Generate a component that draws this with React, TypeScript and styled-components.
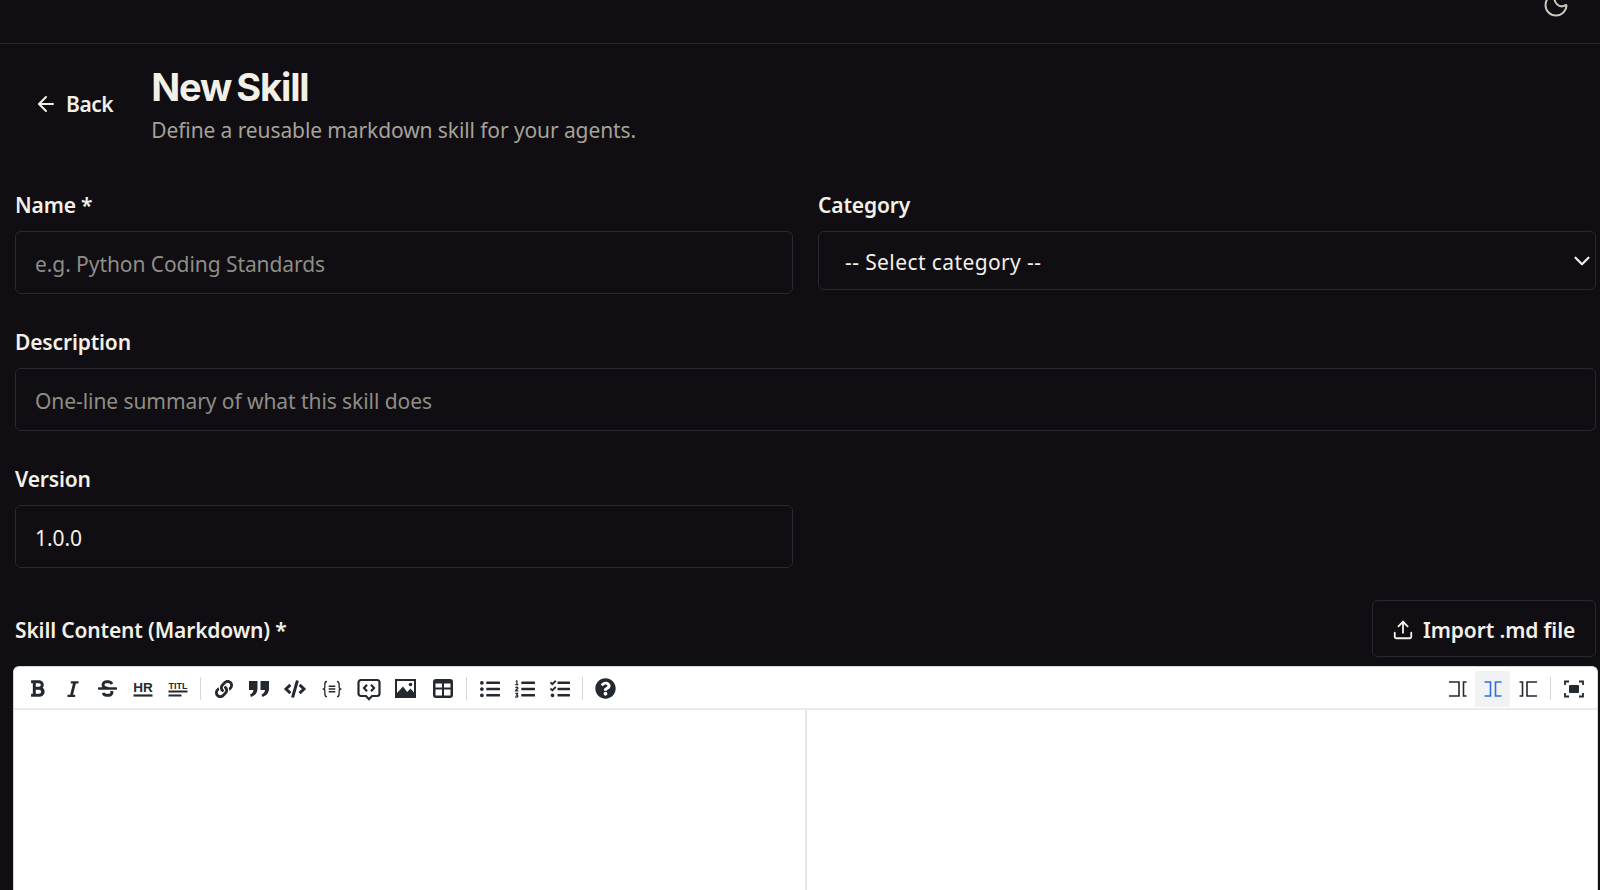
import { FC, ReactNode } from "react";
import styled, { createGlobalStyle } from "styled-components";
import { ArrowLeft, ChevronDown, Moon, Upload } from "lucide-react";
import {
  FaBold,
  FaCode,
  FaItalic,
  FaLink,
  FaListOl,
  FaListUl,
  FaQuestionCircle,
  FaStrikethrough,
  FaTasks,
} from "react-icons/fa";

const GlobalStyle = createGlobalStyle`
  html, body {
    margin: 0;
    height: 100%;
    overflow: hidden;
    background: #100e12;
  }
  * {
    box-sizing: border-box;
  }
`;

const uiFont = `"Noto Sans", "Open Sans", sans-serif`;

const Page = styled.div`
  background: #100e12;
  color: #f3f0e7;
  display: flex;
  flex-direction: column;
  font-family: ${uiFont};
  height: 890px;
  overflow: hidden;
`;

const TopBar = styled.header`
  align-items: flex-end;
  border-bottom: 1px solid #2b2a30;
  display: flex;
  flex: none;
  height: 44px;
  justify-content: flex-end;
  padding: 0 30px 24px 0;
`;

const ThemeIcon = styled(Moon)`
  color: #c9c7c0;
  flex: none;
`;

const Content = styled.main`
  display: flex;
  flex: 1;
  flex-direction: column;
  min-height: 0;
  padding: 0 4px 0 15px;
`;

const TitleRow = styled.div`
  align-items: center;
  display: flex;
  gap: 17px;
  margin: 21px 0 47px;
`;

const BackButton = styled.button`
  align-items: center;
  background: none;
  border: none;
  color: #f3f0e7;
  display: flex;
  font-family: ${uiFont};
  font-size: 21px;
  font-weight: 600;
  gap: 8px;
  letter-spacing: -0.45px;
  padding: 0 21px 2px 19px;
`;

const Title = styled.h1`
  font-family: Inter, sans-serif;
  font-size: 38px;
  font-weight: 700;
  letter-spacing: -1.1px;
  line-height: 44px;
  margin: 0 0 7px;
  word-spacing: -3px;
`;

const Subtitle = styled.p`
  color: #a5a299;
  font-size: 21px;
  letter-spacing: -0.1px;
  line-height: 28px;
  margin: 0;
`;

const FieldGrid = styled.div`
  align-items: start;
  display: grid;
  gap: 34px 25px;
  grid-template-columns: 1fr 1fr;
`;

const Field = styled.div<{ $wide?: boolean }>`
  grid-column: ${(p) => (p.$wide ? "1 / -1" : "auto")};
`;

const Label = styled.label`
  display: block;
  font-size: 21px;
  font-weight: 600;
  letter-spacing: -0.15px;
  line-height: 28px;
  margin-bottom: 12px;
`;

const TextInput = styled.input`
  background: #100e12;
  border: 1px solid #2b2a30;
  border-radius: 6px;
  color: #f3f0e7;
  display: block;
  font-family: ${uiFont};
  font-size: 21px;
  height: 63px;
  letter-spacing: -0.07px;
  outline: none;
  padding: 2px 19px 0;
  width: 100%;

  &::placeholder {
    color: #8f8d86;
    opacity: 1;
  }
`;

const SelectWrap = styled.div`
  position: relative;
`;

const CategorySelect = styled.select`
  appearance: none;
  background: #100e12;
  border: 1px solid #2b2a30;
  border-radius: 6px;
  color: #f3f0e7;
  display: block;
  font-family: ${uiFont};
  font-size: 21px;
  height: 59px;
  letter-spacing: 0.4px;
  outline: none;
  padding: 2px 0 0 26px;
  width: 100%;
`;

const SelectArrow = styled(ChevronDown)`
  color: #f3f0e7;
  pointer-events: none;
  position: absolute;
  right: 1px;
  top: 17px;
`;

const EditorHeader = styled.div`
  align-items: center;
  display: flex;
  justify-content: space-between;
  margin: 32px 0 9px;
`;

const EditorLabel = styled(Label)`
  margin: 0;
  padding-top: 2px;
`;

const ImportButton = styled.button`
  align-items: center;
  background: none;
  border: 1px solid #2b2a30;
  border-radius: 6px;
  color: #f3f0e7;
  display: flex;
  font-family: ${uiFont};
  font-size: 21px;
  font-weight: 600;
  gap: 9px;
  height: 57px;
  letter-spacing: -0.1px;
  padding: 2px 19px 0;
  width: 224px;
`;

const Editor = styled.section`
  background: #fff;
  border: 1px solid #d4d6d9;
  border-bottom: none;
  border-radius: 6px 6px 0 0;
  display: flex;
  flex: 1;
  flex-direction: column;
  margin: 0 -2px;
  min-height: 0;
`;

const Toolbar = styled.div`
  align-items: center;
  border-bottom: 2px solid #e8eaed;
  color: #24292f;
  display: flex;
  flex: none;
  height: 43px;
  justify-content: space-between;
  padding: 2px 6px 0;
`;

const ToolGroup = styled.div`
  align-items: center;
  display: flex;
`;

const ToolButton = styled.button<{ $wide?: boolean; $active?: boolean }>`
  align-items: center;
  background: ${(p) => (p.$active ? "#f0f2f4" : "transparent")};
  border: none;
  color: ${(p) => (p.$active ? "#2f6fe4" : "inherit")};
  display: flex;
  height: 36px;
  justify-content: center;
  padding: 0;
  width: ${(p) => (p.$wide ? "37px" : "35px")};
`;

const Separator = styled.span`
  background: #d5d9de;
  flex: none;
  height: 23px;
  margin: 0 5px;
  width: 1px;
`;

const Panes = styled.div`
  display: grid;
  flex: 1;
  grid-template-columns: 793px 1fr;
  min-height: 0;
`;

const Pane = styled.div`
  &:first-child {
    border-right: 2px solid #e3e5e8;
  }
`;

const Glyph: FC<{ children: ReactNode; size?: number }> = ({ children, size = 20 }) => (
  <svg width={size} height={size} viewBox="0 0 20 20" fill="none" stroke="currentColor" strokeWidth="2">
    {children}
  </svg>
);

const IconHr = () => (
  <Glyph>
    <text x="10" y="12.500" textAnchor="middle" fontFamily="Liberation Sans" fontWeight="700" fontSize="13.500" fill="currentColor" stroke="none">
      HR
    </text>
    <path d="M.5 16.500h19" strokeWidth="2.200" />
  </Glyph>
);

const IconTitle = () => (
  <Glyph>
    <text x="10" y="9.500" textAnchor="middle" fontFamily="Liberation Sans" fontWeight="700" fontSize="9" fill="currentColor" stroke="none">
      TITL
    </text>
    <path d="M.5 12.500h19M.5 16.500h13" strokeWidth="1.800" />
  </Glyph>
);

const IconQuote = () => (
  <svg width="20" height="18" viewBox="0 0 20 18">
    <path
      fill="currentColor"
      d="M0 1h8.500v7.500c0 4-2 7-6.500 8.500l-1-2.500c2.200-1 3.300-2.300 3.500-4.500H0zM11.500 1H20v7.500c0 4-2 7-6.500 8.500l-1-2.500c2.200-1 3.300-2.300 3.500-4.500h-4.500z"
    />
  </svg>
);

const IconCodeBlock = () => (
  <Glyph size={22}>
    <path
      d="M5.500 3C3.500 3 3.500 4.500 3.500 6v2.300C3.500 9.300 2.800 10 1.500 10c1.300 0 2 .7 2 1.700V14c0 1.500 0 3 2 3M14.500 3c2 0 2 1.500 2 3v2.300c0 1 .7 1.700 2 1.700-1.300 0-2 .7-2 1.700V14c0 1.500 0 3-2 3"
      strokeWidth="1.200"
    />
    <path d="M7 7.500h6M7 10h6M7 12.500h6" strokeWidth="1.200" />
  </Glyph>
);

const IconComment = () => (
  <svg width="24" height="24" viewBox="0 0 24 24" fill="none" stroke="currentColor">
    <path
      d="M4 3h16a2.500 2.500 0 0 1 2.500 2.500v11A2.500 2.500 0 0 1 20 19h-5l-3 3.200L9 19H4a2.500 2.500 0 0 1-2.500-2.500v-11A2.500 2.500 0 0 1 4 3z"
      strokeWidth="2.200"
    />
    <path d="M10 7.800 7 11l3 3.200M14 7.800l3 3.200-3 3.200" strokeWidth="2.200" />
  </svg>
);

const IconImage = () => (
  <svg width="21" height="19" viewBox="0 0 21 19">
    <path d="M0 0h21v19H0z" fill="currentColor" />
    <path d="M2 2h17v11.500l-3.500-4-3.300 3.500L8 7.500 2 14z" fill="#fff" />
    <circle cx="15.500" cy="5.500" r="1.800" fill="currentColor" />
  </svg>
);

const IconTable = () => (
  <svg width="20" height="19" viewBox="0 0 20 19">
    <path
      fillRule="evenodd"
      fill="currentColor"
      d="M3 0h14a3 3 0 0 1 3 3v13a3 3 0 0 1-3 3H3a3 3 0 0 1-3-3V3a3 3 0 0 1 3-3zM2.500 4.500v4h6.500v-4zm8.500 0v4h6.500v-4zm-8.500 6V16a.5.5 0 0 0 .5.5h6v-6zm8.500 0v6h6a.5.5 0 0 0 .5-.5v-5.500z"
    />
  </svg>
);

const IconEdit = () => (
  <Glyph>
    <path d="M1 3h10v14H1" strokeWidth="1.600" />
    <path d="M18.500 3h-3v14h3" strokeWidth="1.600" />
  </Glyph>
);

const IconLive = () => (
  <Glyph>
    <path d="M1.500 3h6v14h-6M18.500 3h-6v14h6" strokeWidth="1.600" />
  </Glyph>
);

const IconPreview = () => (
  <Glyph>
    <path d="M19 3H9v14h10" strokeWidth="1.600" />
    <path d="M1.500 3h3v14h-3" strokeWidth="1.600" />
  </Glyph>
);

const IconFullscreen = () => (
  <Glyph>
    <path d="M1 6V2.500h4M15 2.500h4V6M19 14v3.500h-4M5 17.500H1V14" strokeWidth="1.800" />
    <rect x="5" y="6" width="10" height="8" rx="1" fill="currentColor" stroke="none" />
  </Glyph>
);

export default function App() {
  return (
    <Page>
      <GlobalStyle />
      <TopBar>
        <ThemeIcon size={28} strokeWidth={1.7} />
      </TopBar>
      <Content>
        <TitleRow>
          <BackButton>
            <ArrowLeft size={24} />
            Back
          </BackButton>
          <div>
            <Title>New Skill</Title>
            <Subtitle>Define a reusable markdown skill for your agents.</Subtitle>
          </div>
        </TitleRow>

        <FieldGrid>
          <Field>
            <Label htmlFor="name">Name *</Label>
            <TextInput id="name" placeholder="e.g. Python Coding Standards" />
          </Field>
          <Field>
            <Label htmlFor="category">Category</Label>
            <SelectWrap>
              <CategorySelect id="category">
                <option>-- Select category --</option>
              </CategorySelect>
              <SelectArrow size={26} strokeWidth={2} />
            </SelectWrap>
          </Field>
          <Field $wide>
            <Label htmlFor="description">Description</Label>
            <TextInput id="description" placeholder="One-line summary of what this skill does" />
          </Field>
          <Field>
            <Label htmlFor="version">Version</Label>
            <TextInput id="version" defaultValue="1.0.0" />
          </Field>
        </FieldGrid>

        <EditorHeader>
          <EditorLabel>Skill Content (Markdown) *</EditorLabel>
          <ImportButton>
            <Upload size={22} />
            Import .md file
          </ImportButton>
        </EditorHeader>

        <Editor>
          <Toolbar>
            <ToolGroup>
              <ToolButton><FaBold size={19} /></ToolButton>
              <ToolButton><FaItalic size={18} /></ToolButton>
              <ToolButton><FaStrikethrough size={19} /></ToolButton>
              <ToolButton><IconHr /></ToolButton>
              <ToolButton><IconTitle /></ToolButton>
              <Separator />
              <ToolButton><FaLink size={18} /></ToolButton>
              <ToolButton><IconQuote /></ToolButton>
              <ToolButton $wide><FaCode size={22} /></ToolButton>
              <ToolButton $wide><IconCodeBlock /></ToolButton>
              <ToolButton $wide><IconComment /></ToolButton>
              <ToolButton $wide><IconImage /></ToolButton>
              <ToolButton $wide><IconTable /></ToolButton>
              <Separator />
              <ToolButton><FaListUl size={20} /></ToolButton>
              <ToolButton><FaListOl size={20} /></ToolButton>
              <ToolButton><FaTasks size={20} /></ToolButton>
              <Separator />
              <ToolButton><FaQuestionCircle size={21} /></ToolButton>
            </ToolGroup>
            <ToolGroup>
              <ToolButton><IconEdit /></ToolButton>
              <ToolButton $active><IconLive /></ToolButton>
              <ToolButton><IconPreview /></ToolButton>
              <Separator />
              <ToolButton><IconFullscreen /></ToolButton>
            </ToolGroup>
          </Toolbar>
          <Panes>
            <Pane />
            <Pane />
          </Panes>
        </Editor>
      </Content>
    </Page>
  );
}
